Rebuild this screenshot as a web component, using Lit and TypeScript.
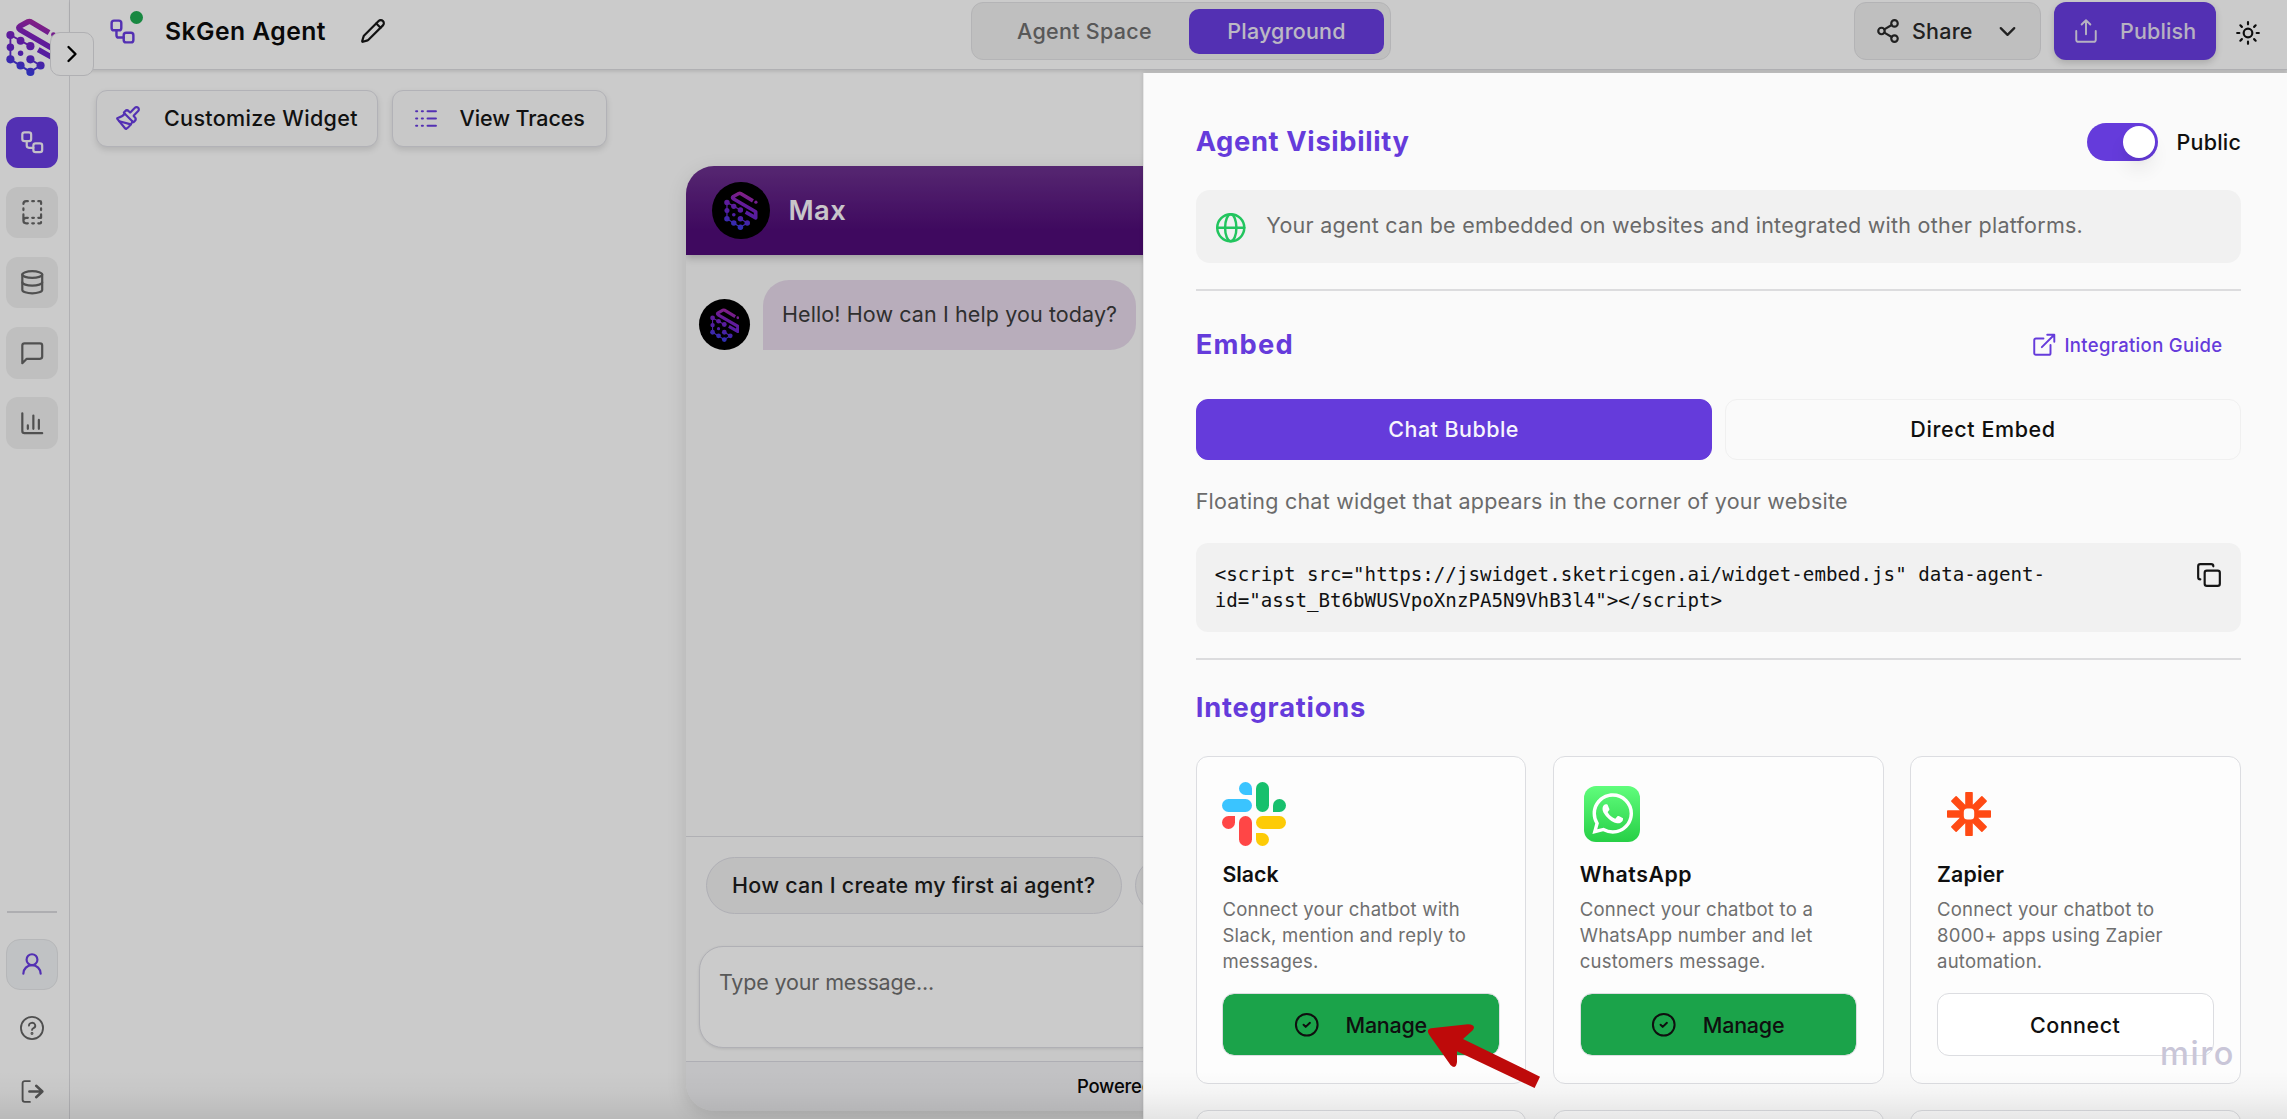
import { LitElement, html, css, svg, nothing } from "lit";
import type { SVGTemplateResult } from "lit";
import { customElement, property } from "lit/decorators.js";

const ICONS: Record<string, SVGTemplateResult> = {
  workflow: svg`<rect x="3" y="3" width="8" height="8" rx="2"/><path d="M7 11v4a2 2 0 0 0 2 2h4"/><rect x="13" y="13" width="8" height="8" rx="2"/>`,
  book: svg`<path d="M12 17h1.5M12 22h1.5M12 2h1.5M17.5 22H19a1 1 0 0 0 1-1M17.5 2H19a1 1 0 0 1 1 1v1.5M20 14v3h-2.5M20 8.5V10M4 10V8.5M4 19.5V14M4 4.5A2.5 2.5 0 0 1 6.5 2H8M8 22H6.5a1 1 0 0 1 0-5H8"/>`,
  database: svg`<ellipse cx="12" cy="5" rx="9" ry="3"/><path d="M3 5v14a9 3 0 0 0 18 0V5"/><path d="M3 12a9 3 0 0 0 18 0"/>`,
  message: svg`<path d="M21 15a2 2 0 0 1-2 2H7l-4 4V5a2 2 0 0 1 2-2h14a2 2 0 0 1 2 2z"/>`,
  chart: svg`<path d="M3 3v16a2 2 0 0 0 2 2h16M18 17V9M13 17V5M8 17v-3"/>`,
  user: svg`<circle cx="12" cy="8" r="5"/><path d="M20 21a8 8 0 0 0-16 0"/>`,
  help: svg`<circle cx="12" cy="12" r="10.2"/><path d="M9.2 9.8a2.9 2.6 0 1 1 4.2 2.3c-.9.4-1.4.9-1.4 1.7"/><circle cx="12" cy="17" r=".5"/>`,
  logout: svg`<path d="M9.5 2H4.5a2 2 0 0 0-2 2v16a2 2 0 0 0 2 2h5"/><path d="M9 12h12.5M15.500 6.500l6 5.500-6 5.500" stroke-width="2.4"/>`,
  chevronRight: svg`<path d="m9 18 6-6-6-6"/>`,
  chevronDown: svg`<path d="m6 9 6 6 6-6"/>`,
  pencil: svg`<path d="M21.174 6.812a1 1 0 0 0-3.986-3.987L3.842 16.174a2 2 0 0 0-.5.83l-1.321 4.352a.5.5 0 0 0 .623.622l4.353-1.32a2 2 0 0 0 .83-.497z"/><path d="m15 5 4 4"/>`,
  brush: svg`<path d="m14.622 17.897-10.68-2.913"/><path d="M18.376 2.622a1 1 0 1 1 3.002 3.002L17.36 9.643a.5.5 0 0 0 0 .707l.944.944a2.41 2.41 0 0 1 0 3.408l-.944.944a.5.5 0 0 1-.707 0L8.354 7.348a.5.5 0 0 1 0-.707l.944-.944a2.41 2.41 0 0 1 3.408 0l.944.944a.5.5 0 0 0 .707 0z"/><path d="M9 8c-1.804 2.71-3.97 3.46-6.583 3.948a.507.507 0 0 0-.302.819l7.32 8.883a1 1 0 0 0 1.185.204C12.735 20.405 16 16.792 16 15"/>`,
  logs: svg`<path d="M3 5h1M3 12h1M3 19h1M8.5 5h1M8.5 12h1M8.5 19h1M14 5h8M14 12h8M14 19h8"/>`,
  share: svg`<circle cx="18" cy="5" r="3"/><circle cx="6" cy="12" r="3"/><circle cx="18" cy="19" r="3"/><path d="m8.59 13.51 6.83 3.98M15.41 6.51l-6.82 3.98"/>`,
  upload: svg`<path d="M3 12v8a2 2 0 0 0 2 2h14a2 2 0 0 0 2-2v-8M16 6l-4-4-4 4M12 2v13"/>`,
  sun: svg`<circle cx="12" cy="12" r="4"/><path d="M12 2v2M12 20v2M4.93 4.93l1.41 1.41M17.66 17.66l1.41 1.41M2 12h2M20 12h2M6.34 17.66l-1.41 1.41M19.07 4.93l-1.41 1.41"/>`,
  globe: svg`<circle cx="12" cy="12" r="11"/><ellipse cx="12" cy="12" rx="4.6" ry="11"/><path d="M1 12h22"/>`,
  external: svg`<path d="M15 2.5h6.5V9M10 14 21 3M18 12v7.5a1.5 1.5 0 0 1-1.500 1.500H4.500a1.500 1.500 0 0 1-1.500-1.500V7.500a1.500 1.500 0 0 1 1.500-1.500h7"/>`,
  copy: svg`<rect x="8" y="8" width="14" height="14" rx="2"/><path d="M4 16c-1.100 0-2-.9-2-2V4c0-1.100.9-2 2-2h10c1.100 0 2 .9 2 2"/>`,
  check: svg`<circle cx="12" cy="12" r="10.200"/><path d="m9 12 2 2 4-3.800"/>`,
};

@customElement("ui-icon")
export class UiIcon extends LitElement {
  @property() name = "";
  @property({ type: Number }) size = 26;
  @property({ type: Number }) weight = 2;
  static styles = css`
    :host { display: inline-flex; flex: none; }
    svg { display: block; overflow: visible; }
  `;
  render() {
    return html`<svg width=${this.size} height=${this.size} viewBox="0 0 24 24" fill="none" stroke="currentColor"
      stroke-width=${this.weight} stroke-linecap="round" stroke-linejoin="round">${ICONS[this.name]}</svg>`;
  }
}

const NODES: [number, number, number][] = [
  [31, 106, 12], [31, 142, 11], [31, 178, 12], [61, 123, 11.5], [90, 139, 12],
  [61, 160, 8], [90, 178, 12], [61, 196, 12], [90, 215, 12], [120, 196, 12],
];

@customElement("brand-mark")
export class BrandMark extends LitElement {
  @property({ type: Number }) height = 58;
  static styles = css`:host { display: inline-flex; flex: none; } svg { display: block; }`;
  render() {
    return html`<svg width=${this.height * 0.865} height=${this.height} viewBox="18 56 148 171">
      <defs><linearGradient id="g" gradientUnits="userSpaceOnUse" x1="130" y1="56" x2="75" y2="227">
        <stop offset="0" stop-color="#b02a9c"/><stop offset=".35" stop-color="#7d22c0"/>
        <stop offset=".65" stop-color="#6426cc"/><stop offset="1" stop-color="#3340e6"/></linearGradient></defs>
      <g fill="none" stroke="url(#g)" stroke-width="16" stroke-linejoin="round">
        <path d="M145 99 91 67Q87 65 83 67L59 80Q52 85 59 90L157 147V174L113 149"/>
        <path stroke-width="5.500" d="M90 139 31 106V178L90 215 120 196 90 178"/>
      </g>
      <g fill="url(#g)"><circle cx="158" cy="105" r="7"/>${NODES.map(([x, y, r]) => svg`<circle cx=${x} cy=${y} r=${r}/>`)}</g>
    </svg>`;
  }
}

const LOGOS: Record<string, SVGTemplateResult> = {
  slack: svg`
    <g fill="#3ac4ff"><path d="M30 13H23.500A6.500 6.500 0 1 1 30 6.500Z"/><rect y="17" width="30" height="13" rx="6.500"/></g>
    <g fill="#17c06d"><rect x="34" width="13" height="30" rx="6.500"/><path d="M51 30V23.500A6.500 6.500 0 1 1 57.500 30Z"/></g>
    <g fill="#ff4646"><path d="M13 34V40.500A6.500 6.500 0 1 1 6.500 34Z"/><rect x="17" y="34" width="13" height="30" rx="6.500"/></g>
    <g fill="#fdcb07"><rect x="34" y="34" width="30" height="13" rx="6.500"/><path d="M34 51H40.500A6.500 6.500 0 1 1 34 57.500Z"/></g>`,
  whatsapp: svg`
    <defs><linearGradient id="w" x1="0" y1="0" x2="0" y2="1"><stop offset="0" stop-color="#60fd7c"/><stop offset="1" stop-color="#27cf46"/></linearGradient></defs>
    <rect x="4" y="4" width="56" height="56" rx="12" fill="url(#w)"/>
    <path transform="translate(12.300 11.300) scale(1.700)" fill="#fff" d="M17.472 14.382c-.297-.149-1.758-.867-2.03-.967-.273-.099-.471-.148-.67.15-.197.297-.767.966-.94 1.164-.173.199-.347.223-.644.075-.297-.15-1.255-.463-2.39-1.475-.883-.788-1.48-1.761-1.653-2.059-.173-.297-.018-.458.13-.606.134-.133.298-.347.446-.52.149-.174.198-.298.298-.497.099-.198.05-.371-.025-.52-.075-.149-.669-1.612-.916-2.207-.242-.579-.487-.5-.669-.51-.173-.008-.371-.01-.57-.01-.198 0-.52.074-.792.372-.272.297-1.04 1.016-1.04 2.479 0 1.462 1.065 2.875 1.213 3.074.149.198 2.096 3.2 5.077 4.487.709.306 1.262.489 1.694.625.712.227 1.36.195 1.871.118.571-.085 1.758-.719 2.006-1.413.248-.694.248-1.289.173-1.413-.074-.124-.272-.198-.57-.347m-5.421 7.403h-.004a9.87 9.87 0 01-5.031-1.378l-.361-.214-3.741.982.998-3.648-.235-.374a9.86 9.86 0 01-1.51-5.26c.001-5.45 4.436-9.884 9.888-9.884 2.64 0 5.122 1.03 6.988 2.898a9.825 9.825 0 012.893 6.994c-.003 5.45-4.437 9.884-9.885 9.884m8.413-18.297A11.815 11.815 0 0012.05 0C5.495 0 .16 5.335.157 11.892c0 2.096.547 4.142 1.588 5.945L.057 24l6.305-1.654a11.882 11.882 0 005.683 1.448h.005c6.554 0 11.89-5.335 11.893-11.893a11.821 11.821 0 00-3.48-8.413z"/>`,
  zapier: svg`<g fill="#ff4a14">${[0, 45, 90, 135].map(a => svg`<rect x="28.200" y="10" width="7.600" height="44" rx=".8" transform=${`rotate(${a} 32 32)`}/>`)}<circle cx="32" cy="32" r="10"/></g><rect x="26.800" y="26.400" width="10.400" height="11.200" rx="3.600" fill="#fdfdfd"/>`,
};

interface Integration { id: string; name: string; text: string; linked: boolean; }
const INTEGRATIONS: Integration[] = [
  { id: "slack", name: "Slack", text: "Connect your chatbot with Slack, mention and reply to messages.", linked: true },
  { id: "whatsapp", name: "WhatsApp", text: "Connect your chatbot to a WhatsApp number and let customers message.", linked: true },
  { id: "zapier", name: "Zapier", text: "Connect your chatbot to 8000+ apps using Zapier automation.", linked: false },
];

@customElement("integration-card")
export class IntegrationCard extends LitElement {
  @property({ attribute: false }) item?: Integration;
  static styles = css`
    * { box-sizing: border-box; }
    :host { display: block; height: 328px; padding: 25.700px; border: 1.500px solid #dcdde1; border-radius: 12px; background: #fdfdfd; }
    .logo { display: block; }
    .name { margin-top: 14px; font-size: 21.300px; line-height: 28px; font-weight: 600; color: #0f0f0f; }
    .name.whatsapp { letter-spacing: .55px; }
    .name.zapier { letter-spacing: .2px; }
    .text { margin-top: 9px; width: 262px; height: 77px; font-size: 18.550px; line-height: 25.700px; letter-spacing: .22px; font-weight: 400; color: #6f6f6f; }
    .btn { display: flex; align-items: center; justify-content: center; gap: 26px; margin-top: 19px; height: 63px; padding-right: 1px; border: 1.500px solid #dcdde1; border-radius: 12px; background: #fff; background-clip: padding-box; color: #0f0f0f; font-size: 21.500px; font-weight: 500; letter-spacing: .5px; }
    .btn.linked { background-color: #1ba34a; letter-spacing: -.25px; }
  `;
  render() {
    const i = this.item;
    if (!i) return nothing;
    return html`
      <svg class="logo" width="64" height="64" viewBox="0 0 64 64">${LOGOS[i.id]}</svg>
      <div class="name ${i.id}">${i.name}</div>
      <div class="text">${i.text}</div>
      <div class="btn ${i.linked ? "linked" : ""}">
        ${i.linked ? html`<ui-icon name="check" size="25.500" weight="1.900"></ui-icon>Manage` : "Connect"}
      </div>`;
  }
}

const NAV = ["workflow", "book", "database", "message", "chart"];

@customElement("app-root")
export class AppRoot extends LitElement {
  static styles = css`
    * { box-sizing: border-box; }
    :host { display: block; position: relative; width: 2287px; height: 1119px; overflow: hidden; background: #fefefe; font-family: Inter, "Liberation Sans", sans-serif; font-size: 21.500px; font-weight: 500; color: #161616; white-space: nowrap; }
    .shell { display: flex; height: 100%; }

    .side { display: flex; flex-direction: column; width: 70px; height: 100%; padding: 18px 11px 0 6px; border-right: 1.500px solid #dedee2; flex: none; }
    .nav { display: flex; flex-direction: column; gap: 18.700px; margin-top: 40.500px; }
    .tile { display: flex; align-items: center; justify-content: center; width: 51.500px; height: 51.500px; border-radius: 12px; background: #efefef; color: #656565; }
    .tile.on { background: #683ce0; color: #f5f2fb; }
    .foot { display: flex; flex-direction: column; align-items: center; margin-top: auto; padding-bottom: 15px; color: #636363; }
    .rule { width: 50px; height: 1.500px; background: #dadade; margin-bottom: 26px; }
    .tile.me { border: 1.500px solid #e4e5e8; background: #f0f3f5; color: #683ce0; border-radius: 14px; }
    .help { margin-top: 25px; }
    .out { margin-top: 38px; }
    .expand { position: absolute; left: 50px; top: 32px; display: flex; align-items: center; justify-content: center; width: 44px; height: 44px; border: 1.500px solid #dcdce0; border-radius: 10px; background: #fefefe; color: #000; }

    .main { display: flex; flex-direction: column; flex: 1; min-width: 0; }
    .top { display: flex; align-items: flex-start; height: 70px; padding: 2px 27px 0 38px; border-bottom: 1.500px solid #dcdce0; box-shadow: 0 2px 3px rgba(0,0,0,.1); flex: none; }
    .who { display: flex; align-items: center; width: 863px; height: 58px; }
    .flow { position: relative; color: #683ce0; display: flex; }
    .flow i { position: absolute; left: 22px; top: -6px; width: 13px; height: 13px; border-radius: 50%; background: #1faa52; }
    .who b { margin-left: 28px; width: 195px; font-size: 24.700px; font-weight: 600; letter-spacing: .45px; color: #0c0c0c; }
    .tabs { display: flex; align-items: center; width: 420px; height: 58px; padding: 0 6px 0 8px; border: 1.500px solid #e2e2e4; border-radius: 12px; background: #efefef; color: #6e6e6e; }
    .tabs span { flex: 1; text-align: center; line-height: 45px; letter-spacing: .3px; font-weight: 450; }
    .tabs .sel { flex: none; width: 195px; border-radius: 10px; background: #683ce0; color: #ece8f6; letter-spacing: .2px; }
    .acts { display: flex; margin-left: auto; height: 58px; align-items: center; }
    .share { display: flex; align-items: center; width: 187.500px; height: 58px; padding-left: 20px; border: 1.500px solid #e0e0e3; border-radius: 12px; background: #efefef; color: #2a2a2a; letter-spacing: .2px; }
    .share span { width: 82px; margin-left: 11.500px; }
    .publish { display: flex; align-items: center; width: 162px; height: 58px; margin-left: 13px; padding-left: 19px; border-radius: 12px; background: #683ce0; color: #e4dff2; box-shadow: 0 3px 7px rgba(0,0,0,.16); letter-spacing: .12px; }
    .publish span { margin-left: 21px; }
    .sun { margin-left: 19px; margin-right: -1px; color: #111; margin-top: 3px; }

    .tools { display: flex; gap: 13.500px; padding: 19.500px 0 0 26px; height: 95.500px; flex: none; }
    .tool { display: flex; align-items: center; height: 57px; padding-left: 18px; border: 1.500px solid #dfdfe5; border-radius: 11px; background: #fafafa; box-shadow: 0 3px 6px rgba(0,0,0,.12); color: #161616; }
    .tool ui-icon { color: #683ce0; margin-right: 23px; }
    .tool.a { width: 282px; letter-spacing: .34px; }
    .tool.b { width: 215px; letter-spacing: -.1px; padding-left: 20px; }
    .tool.b ui-icon { margin-right: 22px; }

    .chat { display: flex; flex-direction: column; width: 983px; height: 945.500px; margin-left: 616px; border-radius: 28px; background: #fafafa; box-shadow: 0 6px 20px rgba(0,0,0,.13); overflow: hidden; }
    .head { display: flex; align-items: center; gap: 19px; height: 89.500px; padding: 0 26px; background: linear-gradient(#6c318e, #4f0c77 72%, #4f0c77); box-shadow: 0 3px 8px rgba(0,0,0,.22); color: #fbf8fc; font-size: 27.300px; font-weight: 600; letter-spacing: .4px; flex: none; }
    .ava { display: flex; align-items: center; justify-content: center; width: 57.500px; height: 57.500px; border-radius: 50%; background: #000; flex: none; }
    .ava.small { width: 51px; height: 51px; }
    .log { display: flex; align-items: flex-end; gap: 13px; height: 581px; padding: 0 13px 486px; flex: none; }
    .bubble { height: 70px; width: 373px; padding-left: 19px; border-radius: 26px 26px 26px 0; background: #e6d9ea; color: #3b3b3b; line-height: 69px; font-weight: 400; letter-spacing: .1px; }
    .chips { display: flex; gap: 13px; padding: 19.500px 20px 0; border-top: 1.500px solid #dcdce2; height: 110px; flex: none; }
    .chip { width: 416px; height: 57.500px; padding-left: 25px; border: 1.500px solid #dcdce3; border-radius: 29px; background: #efefef; line-height: 55px; letter-spacing: .25px; color: #1c1c1c; flex: none; }
    .box { height: 102px; margin: 0 13px; padding: 19px 19px; border: 1.500px solid #dcdce3; border-radius: 24px; background: #fefefe; box-shadow: 0 1px 3px rgba(0,0,0,.1); font-weight: 400; line-height: 32px; letter-spacing: -.16px; color: #6f6f6f; }
    .brand { margin-top: 13px; flex: 1; border-top: 1.500px solid #dadae2; background: #f3f3f6; padding-left: 391px; font-size: 18.500px; line-height: 49px; letter-spacing: -.25px; color: #080808; }

    .scrim { position: absolute; inset: 0; background: rgba(0,0,0,.2); }
    .panel { position: absolute; left: 1143px; top: 73px; width: 1144px; height: 1046px; padding: 50px 46px 0 51.700px; border-left: 1.500px solid #e6e6e6; background: #fafafa; overflow: hidden; box-shadow: 0 0 4px rgba(0,0,0,.12); }
    .row { display: flex; align-items: center; justify-content: space-between; }
    h2 { margin: 0; color: #653bdb; font-size: 27.300px; line-height: 38px; font-weight: 700; letter-spacing: .65px; }
    h2.e { letter-spacing: 1.200px; }
    h2.i { letter-spacing: .8px; margin-top: 29px; }
    .vis { display: flex; align-items: center; gap: 19px; letter-spacing: .2px; color: #0f0f0f; }
    .switch { display: flex; justify-content: flex-end; width: 71px; height: 38px; padding: 3px; border-radius: 19px; background: #653bdb; }
    .switch i { width: 32px; height: 32px; border-radius: 50%; background: #fff; box-shadow: 0 13px 18px rgba(0,0,0,.06), 0 4px 6px rgba(0,0,0,.03); }
    .info { display: flex; height: 73px; margin-top: 29px; padding-left: 20px; border-radius: 14px; background: #f1f1f1; color: #696969; font-weight: 400; letter-spacing: .26px; line-height: 70px; }
    .info ui-icon { color: #22c55e; margin: 22.500px 21px 0 0; }
    .hr { height: 1.500px; margin-top: 26px; background: #dcdcde; }
    .er { margin-top: 35px; }
    .guide { display: flex; align-items: center; gap: 7px; margin-right: 18.500px; color: #653bdb; font-size: 18.500px; letter-spacing: .34px; font-weight: 450; }
    .modes { display: grid; grid-template-columns: 1fr 1fr; gap: 13.500px; margin-top: 35px; text-align: center; line-height: 59px; }
    .modes div { height: 61px; border: 1.500px solid #f0f0f0; border-radius: 12px; letter-spacing: .6px; color: #0f0f0f; }
    .modes .sel { border-color: #653bdb; background: #653bdb; color: #f7f5fd; letter-spacing: .45px; }
    .desc { margin-top: 25px; line-height: 32px; color: #6b6b6b; font-weight: 400; letter-spacing: .22px; }
    .code { display: flex; justify-content: space-between; height: 89.500px; margin-top: 26px; padding: 18.500px 19px; border-radius: 12px; background: #f1f1f1; }
    .code ui-icon { margin-top: 1px; }
    .code pre { margin: 1px 0 0; font: 400 19.170px/25.700px "DejaVu Sans Mono", monospace; color: #111; white-space: pre-wrap; width: 845px; }
    .grid { display: grid; grid-template-columns: repeat(3, 1fr); gap: 26.700px; margin-top: 29px; white-space: normal; }
    .fade { position: absolute; left: 0; right: 0; bottom: 0; height: 48px; background: linear-gradient(rgba(0,0,0,0), rgba(0,0,0,.025) 45%, rgba(0,0,0,.085)); }
    .arrow { position: absolute; left: 1420px; top: 1015px; }
    .mark { position: absolute; left: 2160px; top: 1034px; font-size: 32.500px; line-height: 40px; font-weight: 550; letter-spacing: 1.600px; color: #c9c6d8; }
  `;

  render() {
    return html`
      <div class="shell">
        <div class="side">
          <brand-mark height="58"></brand-mark>
          <div class="nav">${NAV.map((n, i) => html`<div class="tile ${i === 0 ? "on" : ""}"><ui-icon name=${n} size="26.500"></ui-icon></div>`)}</div>
          <div class="foot">
            <div class="rule"></div>
            <div class="tile me"><ui-icon name="user"></ui-icon></div>
            <ui-icon class="help" name="help" weight="1.700"></ui-icon>
            <ui-icon class="out" name="logout" size="25" weight="1.800"></ui-icon>
          </div>
        </div>
        <div class="main">
          <div class="top">
            <div class="who">
              <span class="flow"><ui-icon name="workflow" size="29"></ui-icon><i></i></span>
              <b>SkGen Agent</b>
              <ui-icon name="pencil" size="26"></ui-icon>
            </div>
            <div class="tabs"><span>Agent Space</span><span class="sel">Playground</span></div>
            <div class="acts">
              <div class="share"><ui-icon name="share"></ui-icon><span>Share</span><ui-icon name="chevronDown" size="27"></ui-icon></div>
              <div class="publish"><ui-icon name="upload" weight="1.800"></ui-icon><span>Publish</span></div>
              <ui-icon class="sun" name="sun"></ui-icon>
            </div>
          </div>
          <div class="tools">
            <div class="tool a"><ui-icon name="brush" size="26"></ui-icon>Customize Widget</div>
            <div class="tool b"><ui-icon name="logs" size="25"></ui-icon>View Traces</div>
          </div>
          <div class="chat">
            <div class="head"><span class="ava"><brand-mark height="39"></brand-mark></span>Max</div>
            <div class="log">
              <span class="ava small"><brand-mark height="34"></brand-mark></span>
              <div class="bubble">Hello! How can I help you today?</div>
            </div>
            <div class="chips"><div class="chip">How can I create my first ai agent?</div><div class="chip"></div></div>
            <div class="box">Type your message...</div>
            <div class="brand">Powered</div>
          </div>
        </div>
      </div>
      <div class="expand"><ui-icon name="chevronRight" size="28"></ui-icon></div>
      <div class="scrim"></div>

      <div class="panel">
        <div class="row"><h2>Agent Visibility</h2><div class="vis"><span class="switch"><i></i></span>Public</div></div>
        <div class="info"><ui-icon name="globe" size="29.500" weight="2"></ui-icon>Your agent can be embedded on websites and integrated with other platforms.</div>
        <div class="hr"></div>
        <div class="row er"><h2 class="e">Embed</h2><div class="guide"><ui-icon name="external" weight="1.800"></ui-icon>Integration Guide</div></div>
        <div class="modes"><div class="sel">Chat Bubble</div><div>Direct Embed</div></div>
        <div class="desc">Floating chat widget that appears in the corner of your website</div>
        <div class="code"><pre>${'<script src="https://jswidget.sketricgen.ai/widget-embed.js" data-agent-\nid="asst_Bt6bWUSVpoXnzPA5N9VhB3l4"></' + "script>"}</pre><ui-icon name="copy"></ui-icon></div>
        <div class="hr"></div>
        <h2 class="i">Integrations</h2>
        <div class="grid">
          ${INTEGRATIONS.map(i => html`<integration-card .item=${i}></integration-card>`)}
          ${INTEGRATIONS.map(() => html`<integration-card></integration-card>`)}
        </div>
      </div>
      <div class="fade"></div>
      <svg class="arrow" width="124" height="78" viewBox="1420 1015 124 78" fill="#be0a0a">
        <path d="M1431 1028.300 1468 1024.300Q1477 1025 1472.500 1030.500L1463 1039 1540 1076.700 1534.600 1088 1457 1051.300V1062Q1456 1070 1450.500 1065L1429 1034.500Q1426 1029.500 1431 1028.300Z"/>
      </svg>
      <div class="mark">miro</div>
    `;
  }
}
